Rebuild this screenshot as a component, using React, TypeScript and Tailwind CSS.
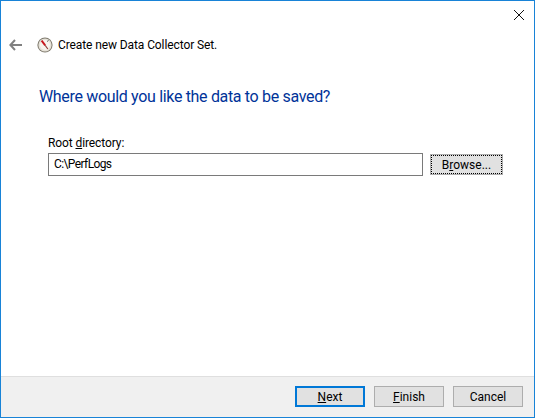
import React from 'react';

const font = "font-['Roboto','Noto_Sans',sans-serif]";

const WizardButton: React.FC<{ active?: boolean; children: React.ReactNode }> = ({ active, children }) => (
  <button
    className={
      active
        ? 'w-[70px] h-[21px] flex items-center justify-center bg-[#e1e1e1] border-2 border-[#0078d7] text-[12px] text-black'
        : 'w-[70px] h-[21px] flex items-center justify-center bg-[#e1e1e1] border border-[#adadad] text-[12px] text-black'
    }
  >
    <span>{children}</span>
  </button>
);

const GaugeIcon = () => (
  <svg width="16" height="16" viewBox="0 0 16 16">
    <circle cx="8" cy="8" r="7.6" fill="#7d786c" />
    <circle cx="8" cy="8" r="6.6" fill="#e6e2d8" />
    <circle cx="8" cy="8" r="5" fill="#f7f4ee" />
    <path d="M4.6 3.6 L8.2 8.4" stroke="#c8161d" strokeWidth="1.9" />
    <path d="M8.2 8.4 L10.8 12" stroke="#8d3a36" strokeWidth="1.1" />
    <path d="M10 4.6 L11.6 3.4" stroke="#6b6b6b" strokeWidth="1" />
  </svg>
);

export default function App() {
  return (
    <div className={`w-[535px] h-[418px] flex flex-col bg-white border border-[#1883d7] overflow-hidden ${font}`}>
      <div className="h-[30px] flex justify-end shrink-0">
        <svg width="12" height="12" viewBox="0 0 12 12" className="mt-[8px] mr-[9px]">
          <path d="M1 1 L11 11 M11 1 L1 11" stroke="#111" strokeWidth="1" />
        </svg>
      </div>

      <div className="flex items-center h-[28px] shrink-0">
        <svg width="13" height="12" viewBox="0 0 13 12" className="ml-[8px]">
          <path d="M6 1 L1.4 6 L6 11 M1.4 6 H13" fill="none" stroke="#808080" strokeWidth="2" />
        </svg>
        <div className="ml-[15px]">
          <GaugeIcon />
        </div>
        <span className="ml-[5px] text-[12px] tracking-[-0.1px] text-black">Create new Data Collector Set.</span>
      </div>

      <h1 className="ml-[38px] mt-[27px] text-[16px] leading-[22px] tracking-[-0.33px] text-[#003399]">
        Where would you like the data to be saved?
      </h1>

      <div className="ml-[47px] mt-[27px] text-[12px] leading-[16px] tracking-[-0.1px] text-black">
        Root <span className="underline">d</span>irectory:
      </div>
      <div className="ml-[47px] mt-[2px] flex items-center">
        <div className="w-[375px] h-[23px] border border-[#7a7a7a] flex items-center pl-[5px] pb-[2px] text-[12px] tracking-[-0.6px] text-black">
          C:\PerfLogs
        </div>
        <button className="ml-[7px] w-[73px] h-[21px] bg-[#e1e1e1] border border-[#adadad] flex items-center justify-center text-[12px] text-black outline-1 outline-dotted outline-black -outline-offset-2">
          <span>
            B<span className="underline">r</span>owse...
          </span>
        </button>
      </div>

      <div className="mt-auto h-[41px] shrink-0 bg-[#f0f0f0] border-t border-[#dfdfdf] flex justify-end items-start pt-[9px] pr-[11px] gap-[9px]">
        <WizardButton active>
          <span className="underline">N</span>ext
        </WizardButton>
        <WizardButton>
          <span className="underline">F</span>inish
        </WizardButton>
        <WizardButton>Cancel</WizardButton>
      </div>
    </div>
  );
}
